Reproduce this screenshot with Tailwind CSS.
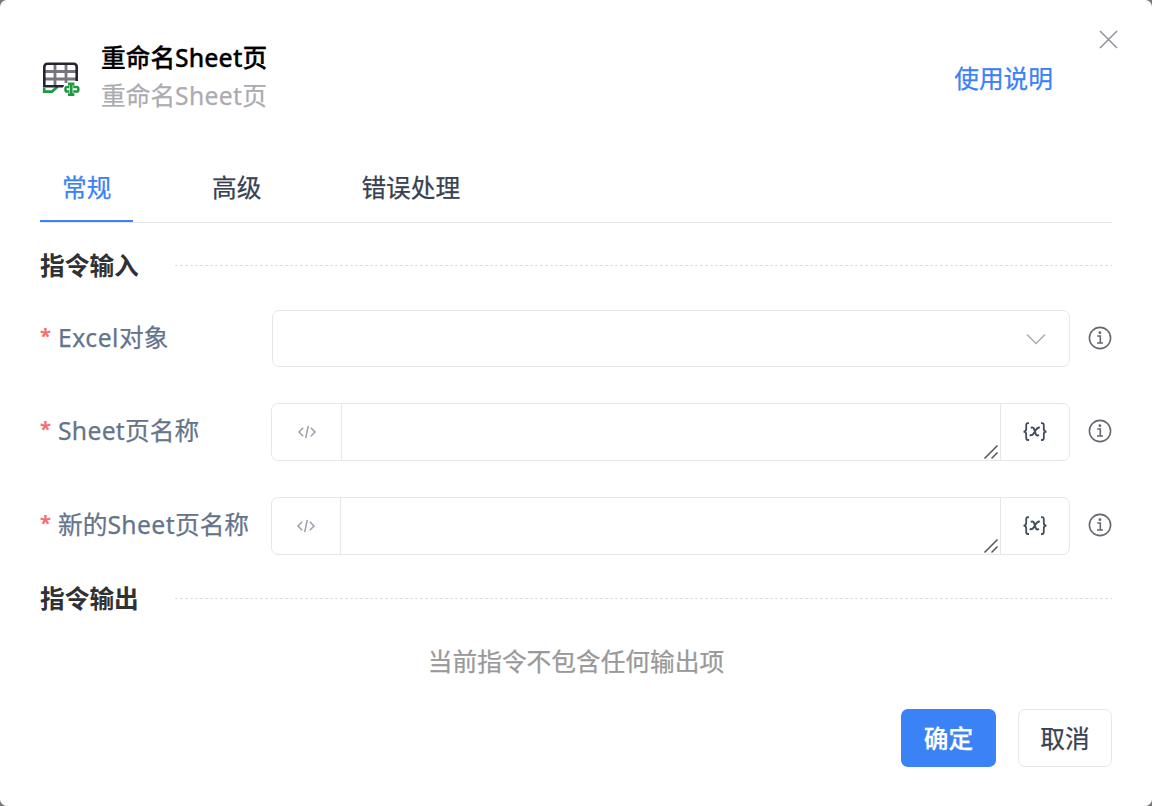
<!DOCTYPE html>
<html lang="zh-CN">
<head>
<meta charset="utf-8">
<title>重命名Sheet页</title>
<script src="https://cdn.jsdelivr.net/npm/@tailwindcss/browser@4"></script>
</head>
<body class="bg-[#777] font-['Noto_Sans','Noto_Sans_CJK_SC',sans-serif] text-[24.7px] leading-[38px] whitespace-nowrap [-webkit-text-stroke:0.25px_currentColor]">
<svg class="hidden">
  <symbol id="info" viewBox="0 0 24 24" fill="none" stroke="#65676e" stroke-width="1.6"><circle cx="12" cy="12" r="10.6"/><path d="M9.2 10h3.1v6.7M9 17h6"/><circle cx="11.9" cy="6.700" r="1.4" fill="#65676e" stroke="none"/></symbol>
  <symbol id="code" viewBox="0 0 20 16" fill="none" stroke="#9a9fab" stroke-width="1.5"><path d="M6.2 3.8 2 8l4.200 4.200M13.800 3.800 18 8l-4.200 4.200M11.300 1.800 8.700 14.200"/></symbol>
  <symbol id="var" viewBox="0 0 26 20" fill="none" stroke="#414e5e" stroke-width="1.8"><path d="M7 1.200H6Q4.200 1.200 4.200 3.200V7Q4.200 9.600 1.500 9.600Q4.200 9.600 4.200 12.200V16Q4.200 18 6 18H7M19 1.200h1Q21.800 1.200 21.800 3.200V7Q21.800 9.600 24.500 9.600Q21.800 9.600 21.800 12.200V16Q21.800 18 20 18h-1"/><path stroke-width="2" d="M8.800 5.800Q11.300 4.700 12.200 7.300L13.600 11.700Q14.400 14.200 17 13M17.800 5.800Q15.700 5 14 7.800L11.800 11.200Q10 13.900 7.700 13"/></symbol>
  <symbol id="grip" viewBox="0 0 16 16" fill="none" stroke="#555" stroke-width="1.500"><path d="M1.500 14.500 14.500 1.500M8.500 14.500l6-6"/></symbol>
</svg>
<main class="h-[806px] w-[1152px] rounded-[7px] bg-white px-10 relative flex flex-col">
  <svg class="absolute left-[1099px] top-[30px] size-[19px]" viewBox="0 0 19 19" stroke="#8f9298" stroke-width="1.500"><path d="M1 1l17 17M18 1 1 18"/></svg>
  <header class="flex h-[157px] shrink-0 pt-[39px]">
    <svg class="mt-[21px] mr-[19px] h-[38px] w-[42px] shrink-0" viewBox="0 0 42 38" fill="none">
      <path d="M4.200 28v3.600H12l5.500-4.800" stroke="#1c9a40" stroke-width="2.600"/>
      <path d="M4.500 11.500h32M4.500 19h32M15 4v22M26 4v19" stroke="#777580" stroke-width="2.800"/>
      <path d="M24 26.300H4.300V7q0-3.200 3.200-3.200h26q3.200 0 3.200 3.200v14" stroke="#272332" stroke-width="2.600"/>
      <path d="M29.500 27h-2.200q-1.800 0-1.800 1.300v1.900q0 1.300 1.800 1.300h2.200M33 27h3.500q1.800 0 1.800 1.300v1.900q0 1.300-1.800 1.300h-3.500M28 24h6.400M28 34.700h6.400M31.200 24v11" stroke="#fff" stroke-width="5"/>
      <path d="M29.300 27h-2q-1.800 0-1.800 1.300v1.900q0 1.300 1.800 1.300h2M33.200 27h3.300q1.800 0 1.800 1.300v1.900q0 1.300-1.800 1.300h-3.300" stroke="#1c9a40" stroke-width="2.500"/>
      <path d="M28 24h6.400M28 34.700h6.400M31.200 24v11" stroke="#1c9a40" stroke-width="2.800"/>
    </svg>
    <div class="flex-1">
      <h1 class="font-medium text-black [-webkit-text-stroke:0.3px_black]">重命名<span class="tracking-[0.100px]">Sheet</span>页</h1>
      <p class="text-[#acabb2]">重命名<span class="tracking-[0.3px]">Sheet</span>页</p>
    </div>
    <a class="mr-[59px] mt-[21px] text-[#3b82f6]">使用说明</a>
  </header>
  <nav class="flex h-[66px] shrink-0 border-b border-[#e5e7eb] text-[#374151]">
    <div class="h-[65px] w-[93px] border-b-2 border-[#3b82f6] pl-[22px] pt-[12px] text-[#3b82f6]">常规</div>
    <div class="ml-[79px] pt-[12px]">高级</div>
    <div class="ml-[100px] pt-[12px]">错误处理</div>
  </nav>
  <section class="mt-[23px] flex h-[38px] shrink-0 items-center text-[#303133]">
    <h2 class="w-[135px] pt-[2px] font-bold [-webkit-text-stroke:0px]">指令输入</h2><div class="h-px flex-1 bg-[repeating-linear-gradient(90deg,#dcdfe6_0_3px,transparent_3px_5px)]"></div>
  </section>
  <div class="mt-[26px] flex h-[57px] shrink-0 items-center text-[#64748b]">
    <span class="w-[18px] shrink-0 pb-[6px] text-[20px] font-semibold text-[#f56c6c]">*</span><label class="w-[214px] shrink-0 pb-px"><span class="tracking-[0.500px]">Excel</span>对象</label>
    <div class="flex h-[57px] w-[798px] shrink-0 items-center justify-end rounded-[7px] border border-[#e5e7eb] pr-[23px]"><svg class="h-[12px] w-[20px]" viewBox="0 0 20 12" fill="none" stroke="#a8abb2" stroke-width="1.500"><path d="m1 1.500 9 9 9-9"/></svg></div>
    <svg class="mb-[2px] ml-[18px] size-[24px] shrink-0"><use href="#info"/></svg>
  </div>
  <div class="mt-[36px] flex h-[58px] shrink-0 items-center text-[#64748b]">
    <span class="w-[18px] shrink-0 pb-[6px] text-[20px] font-semibold text-[#f56c6c]">*</span><label class="w-[213px] shrink-0 pb-[2px]"><span class="tracking-[0.300px]">Sheet</span>页名称</label>
    <div class="flex h-[58px] w-[799px] shrink-0 rounded-[7px] border border-[#e5e7eb]">
      <div class="flex w-[70px] items-center justify-center border-r border-[#e5e7eb]"><svg class="h-[16px] w-[20px]"><use href="#code"/></svg></div>
      <div class="flex flex-1 items-end justify-end pr-px"><svg class="size-[16px]"><use href="#grip"/></svg></div>
      <div class="flex w-[69px] items-center justify-center border-l border-[#e5e7eb]"><svg class="h-[20px] w-[26px]"><use href="#var"/></svg></div>
    </div>
    <svg class="mb-[2px] ml-[18px] size-[24px] shrink-0"><use href="#info"/></svg>
  </div>
  <div class="mt-[36px] flex h-[58px] shrink-0 items-center text-[#64748b]">
    <span class="w-[18px] shrink-0 pb-[6px] text-[20px] font-semibold text-[#f56c6c]">*</span><label class="w-[213px] shrink-0 pb-[2px]">新的<span class="tracking-[0.400px]">Sheet</span>页名称</label>
    <div class="flex h-[58px] w-[799px] shrink-0 rounded-[7px] border border-[#e5e7eb]">
      <div class="flex w-[69px] items-center justify-center border-r border-[#e5e7eb]"><svg class="h-[16px] w-[20px]"><use href="#code"/></svg></div>
      <div class="flex flex-1 items-end justify-end pr-px"><svg class="size-[16px]"><use href="#grip"/></svg></div>
      <div class="flex w-[69px] items-center justify-center border-l border-[#e5e7eb]"><svg class="h-[20px] w-[26px]"><use href="#var"/></svg></div>
    </div>
    <svg class="mb-[2px] ml-[18px] size-[24px] shrink-0"><use href="#info"/></svg>
  </div>
  <section class="mt-[24px] flex h-[38px] shrink-0 items-center text-[#303133]">
    <h2 class="w-[135px] pt-[2px] font-bold [-webkit-text-stroke:0px]">指令输出</h2><div class="h-px flex-1 bg-[repeating-linear-gradient(90deg,#dcdfe6_0_3px,transparent_3px_5px)]"></div>
  </section>
  <p class="mt-[26px] text-center text-[#999]">当前指令不包含任何输出项</p>
  <footer class="mt-[28px] flex justify-end gap-[22px]">
    <button class="h-[58px] w-[95px] rounded-[7px] bg-[#3b82f6] pt-[2px] font-medium text-white">确定</button>
    <button class="h-[58px] w-[94px] rounded-[7px] border border-[#e5e7eb] pt-[2px] text-[#374151]">取消</button>
  </footer>
</main>
</body>
</html>
